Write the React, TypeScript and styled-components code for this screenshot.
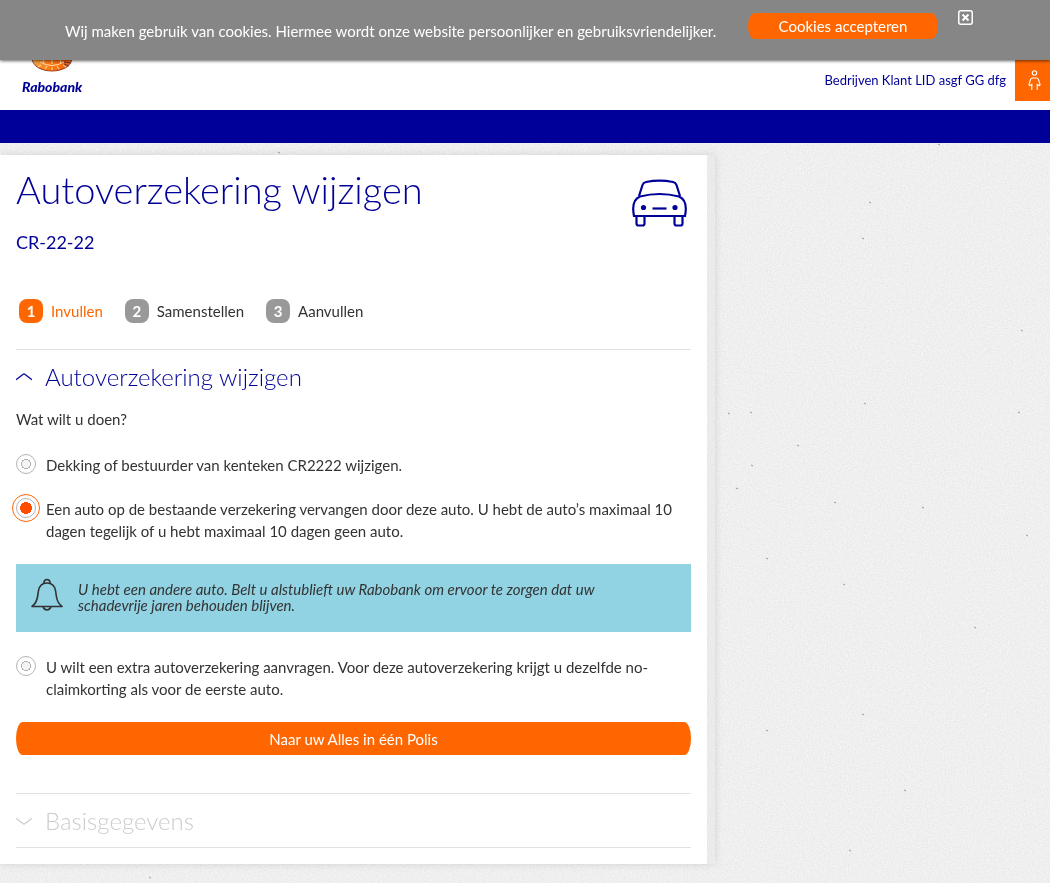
import React, { useState } from "react";
import styled, { createGlobalStyle } from "styled-components";

const blue = "#000099";
const orange = "#ff6600";
const text = "#333333";
const rule = "#e2e2e2";

const GlobalStyle = createGlobalStyle`
  *, *::before, *::after { box-sizing: border-box; }
  body {
    margin: 0;
    background: #eeeeee;
    color: ${text};
    font-family: Lato, "Open Sans", sans-serif;
    font-size: 15px;
    line-height: 22px;
  }
  h1, h2, p, ol, fieldset { margin: 0; padding: 0; border: 0; }
  button { font-family: inherit; cursor: pointer; }
`;

const Paper = styled.svg`
  position: fixed;
  inset: 0;
  z-index: -1;
  width: 100%;
  height: 100%;
`;

const CookieBar = styled.aside`
  position: fixed;
  inset: 0 0 auto 0;
  z-index: 2;
  display: flex;
  align-items: flex-start;
  height: 60px;
  padding: 0 77px 0 65px;
  background: #868686;
  box-shadow: 0 1px 3px rgba(0, 0, 0, 0.6);
  color: #ffffff;
`;

const CookieText = styled.p`
  flex: 0 0 663px;
  padding-top: 20px;
  white-space: nowrap;
`;

const CookieButton = styled.button`
  flex: none;
  width: 190px;
  height: 26px;
  margin: 13px 20px 0;
  padding: 0;
  border: 0;
  border-radius: 7px / 13px;
  background: ${orange};
  color: #ffffff;
  font-size: 15px;
  line-height: 26px;
`;

const CloseButton = styled.button`
  display: flex;
  margin-top: 10px;
  padding: 0;
  border: 0;
  background: none;
`;

const Header = styled.header`
  display: flex;
  align-items: flex-start;
  justify-content: space-between;
  height: 110px;
  background: #ffffff;
`;

const Logo = styled.a`
  display: flex;
  flex-direction: column;
  align-items: center;
  gap: 4px;
  padding: 22px 0 0 22px;
  color: ${blue};
  font-size: 14px;
  font-style: italic;
  font-weight: 900;
  text-decoration: none;
`;

const Account = styled.div`
  display: flex;
  align-items: flex-end;
  height: 101px;
`;

const AccountName = styled.span`
  padding: 0 9px 10px 0;
  color: ${blue};
  font-size: 13px;
`;

const AccountButton = styled.button`
  display: flex;
  align-items: flex-end;
  justify-content: center;
  width: 35px;
  height: 101px;
  padding: 0 0 10px 4px;
  border: 0;
  background: ${orange};
`;

const Nav = styled.nav`
  height: 33px;
  background: ${blue};
`;

const Shell = styled.main`
  max-width: 715px;
  margin: 12px 0 19px;
  padding-right: 8px;
  background: rgba(225, 225, 225, 0.3);
  box-shadow: 0 0 8px rgba(0, 0, 0, 0.12);
`;

const Card = styled.div`
  padding: 0 16px 16px;
  background: #ffffff;
`;

const TitleRow = styled.div`
  display: flex;
  justify-content: space-between;
  padding-top: 9px;
`;

const Title = styled.h1`
  color: ${blue};
  font-size: 38px;
  font-weight: 300;
  line-height: 50px;
`;

const Plate = styled.p`
  padding-top: 16px;
  color: ${blue};
  font-size: 18px;
  line-height: 24px;
`;

const CarIcon = styled.svg`
  flex: none;
  margin: 15px 3px 0 0;
`;

const Steps = styled.ol`
  display: flex;
  gap: 22px;
  padding: 45px 3px 26px;
  list-style: none;
`;

const Step = styled.li<{ $active?: boolean }>`
  display: flex;
  align-items: center;
  gap: 8px;
  color: ${(p) => (p.$active ? orange : text)};
`;

const StepNumber = styled.span<{ $active?: boolean }>`
  width: 24px;
  height: 24px;
  border-radius: 8px;
  background: ${(p) => (p.$active ? orange : "#999999")};
  color: #ffffff;
  font-weight: 700;
  line-height: 24px;
  text-align: center;
`;

const Section = styled.section`
  border-top: 1px solid ${rule};
`;

const SectionTitle = styled.h2`
  font-size: 24px;
  font-weight: 300;
`;

const SectionToggle = styled.button<{ $muted?: boolean }>`
  display: flex;
  align-items: center;
  gap: 13px;
  width: 100%;
  height: 53px;
  padding: 0;
  border: 0;
  background: none;
  color: ${(p) => (p.$muted ? "#cccccc" : blue)};
  font-size: inherit;
  font-weight: inherit;
  text-align: left;
`;

const Question = styled.legend`
  padding: 5px 0 2px;
`;

const Option = styled.label`
  display: flex;
  align-items: flex-start;
  gap: 10px;
  padding-top: 22px;
`;

const Radio = styled.input`
  appearance: none;
  flex: none;
  width: 20px;
  height: 20px;
  margin: 0;
  border: 1px solid #b4b4b4;
  border-radius: 50%;
  background: radial-gradient(circle, #f4f4f4 4px, #b4b4b4 4px, #b4b4b4 5px, #ffffff 5px);
  &:checked {
    background: radial-gradient(circle, #ff4d00 6px, #ffffff 6px);
    outline: 1px solid ${orange};
    outline-offset: 3px;
  }
`;

const Notice = styled.div`
  display: flex;
  gap: 15px;
  height: 68px;
  margin: 22px 0 2px;
  padding: 14px 62px 0 15px;
  background: #91d2e3;
  font-style: italic;
  line-height: 16px;

  svg { flex: none; }
`;

const NoticeText = styled.p`
  padding-top: 3px;
`;

const SubmitButton = styled.button`
  width: 100%;
  height: 33px;
  margin: 22px 0 38px;
  padding: 0;
  border: 0;
  border-radius: 7px / 17px;
  background: ${orange};
  color: #ffffff;
  font-size: 15px;
`;

const LastSection = styled(Section)`
  border-bottom: 1px solid ${rule};
`;

const Chevron = ({ up }: { up?: boolean }) => (
  <svg width="16" height="8" viewBox="0 0 16 8" fill="none" stroke="currentColor" strokeWidth="1.3" aria-hidden="true">
    <path d={up ? "M0 6.800 7.200 1.200Q8 .6 8.800 1.200L16 6.800" : "M0 1.200 7.200 6.800Q8 7.400 8.800 6.800L16 1.200"} />
  </svg>
);

const specks = [[869, 202], [862, 238], [938, 144], [766, 558], [728, 413], [750, 412], [797, 445], [864, 403], [736, 488], [751, 465], [834, 502], [922, 507], [1026, 535], [843, 584], [1018, 412], [766, 730], [849, 850], [862, 714], [974, 627], [149, 877], [278, 152], [1021, 330], [904, 790]];

export default function App() {
  const [choice, setChoice] = useState("vervangen");
  const radio = (value: string) => ({
    type: "radio",
    name: "wijziging",
    value,
    checked: choice === value,
    onChange: () => setChoice(value),
  });

  return (
    <>
      <GlobalStyle />
      <Paper aria-hidden="true">
        <filter id="grain" x="0" y="0" width="100%" height="100%" colorInterpolationFilters="sRGB">
          <feTurbulence type="fractalNoise" baseFrequency="0.7" numOctaves="3" seed="4" />
          <feColorMatrix values="0.09 0 0 0 0.892  0.09 0 0 0 0.892  0.09 0 0 0 0.892  0 0 0 0 1" />
        </filter>
        <rect width="100%" height="100%" fill="#eeeeee" filter="url(#grain)" />
        {specks.map(([x, y]) => (
          <path key={`${x}-${y}`} d={`M${x} ${y}l2 1`} stroke="#999999" strokeWidth="1" />
        ))}
      </Paper>

      <CookieBar>
        <CookieText>
          Wij maken gebruik van cookies. Hiermee wordt onze website persoonlijker en gebruiksvriendelijker.
        </CookieText>
        <CookieButton type="button">Cookies accepteren</CookieButton>
        <CloseButton type="button" aria-label="Sluiten">
          <svg width="15" height="15" viewBox="0 0 15 15" fill="none" stroke="#ffffff">
            <rect x="0.75" y="0.75" width="13.5" height="13.5" rx="2" strokeWidth="1.5" />
            <path d="M4.5 4.5l6 6M10.5 4.5l-6 6" strokeWidth="2" />
          </svg>
        </CloseButton>
      </CookieBar>

      <Header>
        <Logo href="#">
          <svg width="42" height="50" viewBox="0 0 42 50" aria-hidden="true">
            <defs>
              <linearGradient id="globe" x1="0" x2="1">
                <stop offset="0" stopColor="#f5b04c" />
                <stop offset="0.4" stopColor="#ff7a10" />
                <stop offset="1" stopColor="#f26000" />
              </linearGradient>
            </defs>
            <path d="M1 25C1 10 41 10 41 34C41 54 1 54 1 34Z" fill="url(#globe)" />
            <path d="M1 37C4 53 38 53 41 37" fill="none" stroke="#a04420" strokeWidth="1.1" />
            <path d="M9 40Q21 47 33 40M21 38v4M21 45v3M12 38l1 3M10 43l-3 2M30 38l-1 3M32 43l3 2M16 44l-2 3M26 44l2 3" fill="none" stroke="#ffe2bd" strokeWidth="1" />
            <path d="M33 40l7 1M33 42l5 2" stroke="#6a3044" strokeWidth="1" />
          </svg>
          <span>Rabobank</span>
        </Logo>
        <Account>
          <AccountName>Bedrijven Klant LID asgf GG dfg</AccountName>
          <AccountButton type="button" aria-label="Account">
            <svg width="13" height="21" viewBox="0 0 13 21" fill="none" stroke="#ffffff" strokeWidth="1.1" aria-hidden="true">
              <circle cx="6.5" cy="3" r="2.2" />
              <path d="M3.8 20v-5.500L1.900 15.500.9 14.800 2.500 9.600Q3 8 4.600 8h3.800Q10 8 10.500 9.600l1.600 5.200-1 .7-1.900-1V20" />
            </svg>
          </AccountButton>
        </Account>
      </Header>
      <Nav />

      <Shell>
        <Card>
          <TitleRow>
            <div>
              <Title>Autoverzekering wijzigen</Title>
              <Plate>CR-22-22</Plate>
            </div>
            <CarIcon width="57" height="48" viewBox="0 0 57 48" fill="none" stroke={blue} strokeWidth="2.2" aria-hidden="true">
              <path d="M8 17 11.500 6Q12.300 3.600 15 3 28.500 .4 42 3 44.700 3.600 45.500 6L49 17" />
              <path d="M3 37C1 27 3 20 9 17.500Q28.500 12.500 48 17.500C54 20 56 27 54 37Z" />
              <path d="M5.500 37v7.500q0 2 2 2h4q2 0 2-2V37M43.500 37v7.500q0 2 2 2h4q2 0 2-2V37" />
              <path d="M21.500 29.500h14" />
              <circle cx="12.500" cy="28.500" r="2.600" fill={blue} stroke="none" />
              <circle cx="44" cy="28.500" r="2.600" fill={blue} stroke="none" />
            </CarIcon>
          </TitleRow>

          <Steps>
            <Step $active aria-current="step">
              <StepNumber $active>1</StepNumber>Invullen
            </Step>
            <Step>
              <StepNumber>2</StepNumber>Samenstellen
            </Step>
            <Step>
              <StepNumber>3</StepNumber>Aanvullen
            </Step>
          </Steps>

          <Section>
            <SectionTitle>
              <SectionToggle type="button" aria-expanded="true">
                <Chevron up />Autoverzekering wijzigen
              </SectionToggle>
            </SectionTitle>
            <fieldset>
              <Question>Wat wilt u doen?</Question>
              <Option>
                <Radio {...radio("dekking")} />
                <span>Dekking of bestuurder van kenteken CR2222 wijzigen.</span>
              </Option>
              <Option>
                <Radio {...radio("vervangen")} />
                <span>
                  Een auto op de bestaande verzekering vervangen door deze auto. U hebt de auto’s maximaal 10 dagen
                  tegelijk of u hebt maximaal 10 dagen geen auto.
                </span>
              </Option>
              <Notice>
                <svg width="32" height="33" viewBox="0 0 32 33" fill="none" stroke={text} strokeWidth="1.6" strokeLinejoin="round" aria-hidden="true">
                  <path d="M1 28.500Q5.500 25 6.500 19L7.500 12.500Q9 5 16 5T24.500 12.500L25.500 19Q26.500 25 31 28.500Z" />
                  <path d="M12.800 5Q13.200 1.500 16 1.500T19.200 5M12 28.500Q13 32 16 32T20 28.500" />
                </svg>
                <NoticeText>
                  U hebt een andere auto. Belt u alstublieft uw Rabobank om ervoor te zorgen dat uw schadevrije jaren
                  behouden blijven.
                </NoticeText>
              </Notice>
              <Option>
                <Radio {...radio("extra")} />
                <span>
                  U wilt een extra autoverzekering aanvragen. Voor deze autoverzekering krijgt u dezelfde no-claimkorting
                  als voor de eerste auto.
                </span>
              </Option>
            </fieldset>
            <SubmitButton type="button">Naar uw Alles in één Polis</SubmitButton>
          </Section>

          <LastSection>
            <SectionTitle>
              <SectionToggle type="button" aria-expanded="false" $muted>
                <Chevron />Basisgegevens
              </SectionToggle>
            </SectionTitle>
          </LastSection>
        </Card>
      </Shell>
    </>
  );
}
